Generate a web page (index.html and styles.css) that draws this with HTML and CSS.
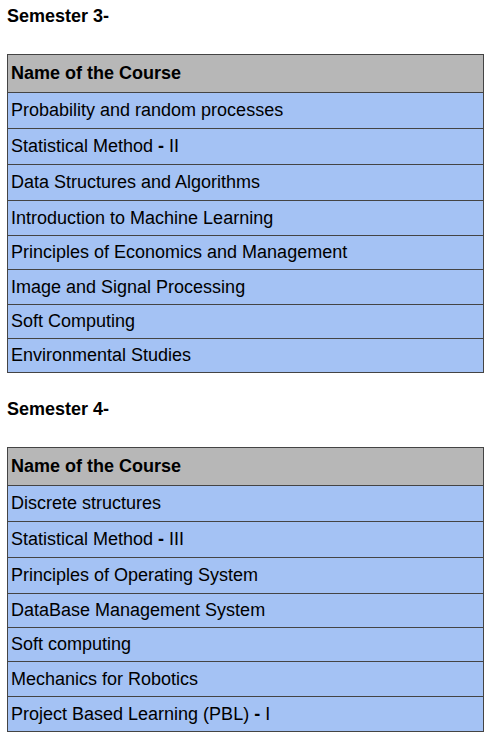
FILE: index.html
```html
<!DOCTYPE html>
<html lang="en">
<head>
  <meta charset="UTF-8">
  <meta name="viewport" content="width=device-width, initial-scale=1.0">
  <title>Courses</title>
  <link rel="stylesheet" href="styles.css">
</head>
<body>

<!-- Semester 3 -->
<h3 class="sem-title">Semester 3-</h3>
<table class="course-table">
  <thead>
    <tr><th>Name of the Course</th></tr>
  </thead>
  <tbody>
    <tr class="tall"><td>Probability and random processes</td></tr>
    <tr class="tall"><td>Statistical Method <b>-</b> II</td></tr>
    <tr class="tall"><td>Data Structures and Algorithms</td></tr>
    <tr><td>Introduction to Machine Learning</td></tr>
    <tr class="short"><td>Principles of Economics and Management</td></tr>
    <tr><td>Image and Signal Processing</td></tr>
    <tr class="short"><td>Soft Computing</td></tr>
    <tr class="short"><td>Environmental Studies</td></tr>
  </tbody>
</table>

<!-- Semester 4 -->
<h3 class="sem-title second">Semester 4-</h3>
<table class="course-table">
  <thead>
    <tr><th>Name of the Course</th></tr>
  </thead>
  <tbody>
    <tr class="tall"><td>Discrete structures</td></tr>
    <tr class="tall"><td>Statistical Method <b>-</b> III</td></tr>
    <tr class="tall"><td>Principles of Operating System</td></tr>
    <tr class="short"><td>DataBase Management System</td></tr>
    <tr class="short"><td>Soft computing</td></tr>
    <tr><td>Mechanics for Robotics</td></tr>
    <tr><td>Project Based Learning (PBL) <b>-</b> I</td></tr>
  </tbody>
</table>

</body>
</html>
```

FILE: styles.css
```css
/* Base */
* {
  margin: 0;
  padding: 0;
  box-sizing: border-box;
}

body {
  font-family: "Liberation Sans", Arial, sans-serif;
  color: #000;
  background: #fff;
  padding: 0 7px;
}

/* Headings */
.sem-title {
  font-size: 18px;
  line-height: 20px;
  font-weight: bold;
  margin-top: 6px;
  margin-bottom: 28px;
}

.sem-title.second {
  margin-top: 26px;
}

/* Tables */
.course-table {
  width: 477px;
  border-collapse: collapse;
  border: 1px solid #222;
}

.course-table th,
.course-table td {
  text-align: left;
  font-size: 18px;
  padding: 0 3px;
  border: 1px solid #444;
}

.course-table th {
  background: #b7b7b7;
  font-weight: bold;
  height: 38px;
}

.course-table td {
  background: #a4c2f4;
  height: 35px;
}

.course-table tr.tall td {
  height: 36px;
}

.course-table tr.short td {
  height: 34px;
}
```
